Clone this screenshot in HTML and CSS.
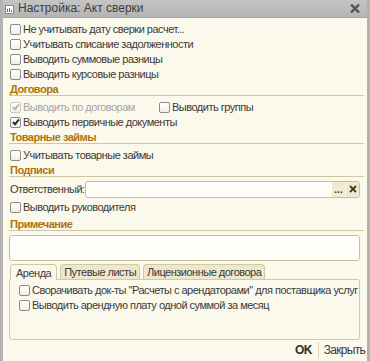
FILE: index.html
```html
<!DOCTYPE html>
<html lang="ru">
<head>
  <meta charset="UTF-8" />
  <title>Настройка: Акт сверки</title>
  <link rel="stylesheet" href="styles.css">
</head>
<body>
  <div class="window">
    <div class="titlebar">
      <svg class="app-icon" width="9" height="9" viewBox="0 0 9 9">
        <rect x="0.5" y="0.5" width="8" height="8" fill="#fff" stroke="#8a8a8a"/>
        <rect x="2" y="4" width="1" height="3" fill="#d23a2a"/>
        <rect x="4" y="3" width="1" height="4" fill="#3a9a3a"/>
        <rect x="6" y="5" width="1" height="2" fill="#d23a2a"/>
      </svg>
      <span class="title">Настройка: Акт сверки</span>
      <svg class="close" width="10" height="9" viewBox="0 0 10 9">
        <path d="M1 0.5 L9 8.5 M9 0.5 L1 8.5" stroke="#555" stroke-width="2.4"/>
      </svg>
    </div>

    <div class="content">
      <label class="row"><span class="cb"></span>Не учитывать дату сверки расчет...</label>
      <label class="row"><span class="cb"></span>Учитывать списание задолженности</label>
      <label class="row"><span class="cb"></span>Выводить суммовые разницы</label>
      <label class="row"><span class="cb"></span>Выводить курсовые разницы</label>

      <div class="group-title">Договора</div>
      <div class="row-pair">
        <label class="row disabled col"><span class="cb checked"></span>Выводить по договорам</label>
        <label class="row"><span class="cb"></span>Выводить группы</label>
      </div>
      <label class="row"><span class="cb checked"></span>Выводить первичные документы</label>

      <div class="group-title">Товарные займы</div>
      <label class="row"><span class="cb"></span>Учитывать товарные займы</label>

      <div class="group-title">Подписи</div>
      <div class="field-row">
        <span class="field-label">Ответственный:</span>
        <div class="field">
          <span class="field-btn dots">...</span>
          <span class="field-btn clear">
            <svg width="8" height="8" viewBox="0 0 8 8">
              <path d="M1 1 L7 7 M7 1 L1 7" stroke="#4a3a10" stroke-width="1.8"/>
            </svg>
          </span>
        </div>
      </div>
      <label class="row row-sign"><span class="cb"></span>Выводить руководителя</label>

      <div class="group-title">Примечание</div>
      <div class="note"></div>

      <div class="tabs">
        <span class="tab active">Аренда</span>
        <span class="tab">Путевые листы</span>
        <span class="tab">Лицензионные договора</span>
      </div>
      <div class="tab-panel">
        <label class="row"><span class="cb"></span>Сворачивать док-ты "Расчеты с арендаторами" для поставщика услуг</label>
        <label class="row"><span class="cb"></span>Выводить арендную плату одной суммой за месяц</label>
      </div>
    </div>

    <div class="footer">
      <span class="btn-ok">OK</span>
      <span class="sep"></span>
      <span class="btn-close">Закрыть</span>
    </div>
  </div>
</body>
</html>
```

FILE: styles.css
```css
body {
  margin: 0;
  font-family: "Liberation Sans", Arial, sans-serif;
  font-size: 11px;
  letter-spacing: -0.5px;
  color: #3a3a3a;
  background: #fbf9ec;
}
.window {
  width: 370px;
  height: 361px;
  box-sizing: border-box;
  border-left: 3px solid #b2b2b2;
  border-right: 3px solid #b2b2b2;
  background: #fbf9ec;
  display: flex;
  flex-direction: column;
}
.titlebar {
  height: 17px;
  border-bottom: 1px solid #a4a4a4;
  background: linear-gradient(#c4c4c4, #b4b4b4);
  display: flex;
  align-items: center;
  padding: 0 7px 0 2px;
}
.app-icon {
  margin-right: 4px;
  margin-top: 2px;
}
.title {
  font-size: 12px;
  letter-spacing: 0;
  color: #404040;
  flex: 1;
}
.content {
  padding: 4px 7px 0 6px;
  flex: 1;
}
.row {
  display: flex;
  align-items: center;
  height: 15px;
  padding-left: 1px;
  white-space: nowrap;
}
.cb {
  width: 9px;
  height: 9px;
  border: 1px solid #8c8c8c;
  border-radius: 2px;
  background: linear-gradient(#ffffff, #f2f0e4);
  margin-right: 2px;
  position: relative;
  flex: none;
}
.cb.checked::after {
  content: "";
  position: absolute;
  left: 3px;
  top: 0;
  width: 2px;
  height: 5px;
  border: solid #2a2a2a;
  border-width: 0 2px 2px 0;
  transform: rotate(40deg);
}
.disabled {
  color: #a6a6a6;
}
.disabled .cb {
  border-color: #c8c8c8;
}
.disabled .cb.checked::after {
  border-color: #b8b8b8;
}
.row-pair {
  display: flex;
}
.col {
  width: 148px;
}
.group-title {
  height: 12px;
  line-height: 12px;
  margin: 1px -4px 4px 0;
  padding-left: 1px;
  border-bottom: 1px solid #cdc7a2;
  color: #ae720c;
  font-weight: bold;
}
.field-row {
  display: flex;
  align-items: center;
  height: 17px;
  padding-left: 1px;
}
.field-label {
  width: 75px;
}
.field {
  flex: 1;
  height: 15px;
  border: 1px solid #c4bf9c;
  border-radius: 3px;
  background: #fffef8;
  display: flex;
  justify-content: flex-end;
  overflow: hidden;
}
.field-btn {
  width: 13px;
  height: 15px;
  background: #efebd2;
  display: flex;
  align-items: center;
  justify-content: center;
}
.dots {
  font-weight: bold;
  color: #4a3a10;
  letter-spacing: 0;
  font-size: 10px;
  line-height: 15px;
  align-items: flex-end;
  border-right: 1px solid #fbf9ec;
}
.row-sign {
  margin-top: 2px;
  margin-bottom: 3px;
}
.note {
  height: 24px;
  margin-top: 2px;
  border: 1px solid #c4bf9c;
  border-radius: 3px;
  background: #fffef8;
}
.tabs {
  display: flex;
  gap: 3px;
  margin-top: 2px;
  padding-left: 1px;
  height: 16px;
  align-items: flex-end;
}
.tab {
  height: 14px;
  line-height: 14px;
  padding: 0 3px;
  border: 1px solid #cfc9a6;
  border-bottom: none;
  border-radius: 4px 4px 0 0;
  background: #ece7cd;
  color: #3a3a3a;
}
.tab.active {
  height: 15px;
  line-height: 16px;
  padding: 0 5px;
  background: #fbf9ec;
  margin-bottom: -1px;
  position: relative;
}
.tab-panel {
  height: 56px;
  border: 1px solid #cfc9a6;
  border-radius: 0 3px 3px 3px;
  padding: 3px 8px 0 8px;
}
.tab-panel .row {
  height: 15px;
}
.footer {
  height: 22px;
  display: flex;
  align-items: center;
  justify-content: flex-end;
  padding-right: 2px;
  font-size: 12px;
  letter-spacing: -0.7px;
}
.btn-ok {
  font-weight: bold;
  color: #2e2e2e;
}
.sep {
  width: 1px;
  height: 16px;
  background: #d8d3b4;
  margin: 0 5px 0 6px;
}
.btn-close {
  color: #3a3a3a;
}
```
